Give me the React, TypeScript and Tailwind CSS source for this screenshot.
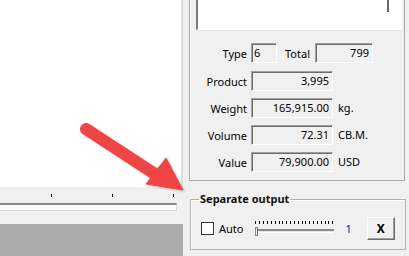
import React from "react";

const font = { fontFamily: '"Noto Sans", "Open Sans", sans-serif' };

const box =
  "h-[20px] border border-t-[#a0a0a0] border-l-[#a0a0a0] border-r-white border-b-white shadow-[inset_1px_1px_0_#6d6d6d] bg-[#f0f0f0] text-[11px] leading-[18px] text-black";

interface FieldProps {
  label: string;
  value: string;
  unit?: string;
}

const Field: React.FC<FieldProps> = ({ label, value, unit }) => (
  <div className="flex items-center">
    <div className="w-[57px] text-right text-[11px] leading-[20px] pt-[2px]">{label}</div>
    <div className={box + " ml-[4px] w-[82px] text-right pr-[3px]"}>{value}</div>
    {unit && <div className="ml-[5px] text-[11px] leading-[20px]">{unit}</div>}
  </div>
);

export default function App() {
  return (
    <div className="w-[409px] h-[256px] bg-[#f0f0f0] flex overflow-hidden relative text-black" style={font}>
      {/* Left pane */}
      <div className="w-[183px] flex flex-col">
        <div className="h-[187px] bg-white border-r-2 border-[#dedede]" />
        <div className="h-[37px] flex flex-col">
          {/* ticks */}
          <div className="w-[174px] flex justify-end gap-[60px] mt-[7px]">
            <div className="w-px h-[3px] bg-black" />
            <div className="w-px h-[3px] bg-black" />
            <div className="w-px h-[3px] bg-black" />
          </div>
          {/* track */}
          <div className="w-[177px] h-[8px] mt-[6px] border-t-2 border-t-[#8a8a8a] border-r border-r-[#d8d8d8] border-b border-b-[#d8d8d8] bg-[#fbfbfb]" />
        </div>
        <div className="flex-1 bg-[#acacac]" />
      </div>

      {/* Right pane */}
      <div className="ml-[6px] flex flex-col">
        {/* Main group */}
        <div className="w-[216px] h-[181px] border-l border-r border-b border-[#a8a8a8] shadow-[inset_1px_0_0_#ffffff] flex flex-col">
          {/* Listbox */}
          <div className="ml-[6px] w-[206px] h-[30px] bg-white border-l-2 border-l-[#7a7a7a] border-b border-b-white border-r border-r-white shadow-[0_1px_0_#e3e3e3] relative">
            <div className="absolute left-[189px] top-0 w-[2px] h-[12px] bg-[#6a6a6a]" />
          </div>

          <div className="mt-[12px] flex flex-col">
            <div className="flex items-center">
              <div className="w-[57px] text-right text-[11px] leading-[20px] pt-[2px]">Type</div>
              <div className={box + " ml-[4px] w-[26px] pl-[2px]"}>6</div>
              <div className="w-[38px] pr-[5px] text-right text-[11px] leading-[20px] pt-[2px]">Total</div>
              <div className={box + " w-[58px] text-right pr-[3px]"}>799</div>
            </div>
            <div className="mt-[6px] flex flex-col gap-[5px]">
              <Field label="Product" value="3,995" />
              <Field label="Weight" value="165,915.00" unit="kg." />
              <Field label="Volume" value="72.31" unit="CB.M." />
              <Field label="Value" value="79,900.00" unit="USD" />
            </div>
          </div>
        </div>

        {/* Separate output group */}
        <fieldset className="mt-[10px] ml-px w-[216px] h-[59px] border border-[#b0b0b0] shadow-[inset_1px_1px_0_#ffffff]">
          <legend className="ml-[8px] px-[1px] text-[11px] leading-[16px] font-bold text-[#111]">Separate output</legend>
          <div className="mt-[10px] flex items-center h-[23px]">
            <div className="ml-[10px] w-[13px] h-[13px] border border-[#333] bg-white" />
            <div className="ml-[5px] text-[11px] leading-[16px]">Auto</div>
            <div className="ml-[12px] w-[79px] h-[16px] relative flex flex-col">
              <div className="flex justify-between pr-[1px]">
                {Array.from({ length: 21 }).map((_, i) => (
                  <div key={i} className="w-px h-[3px] bg-black" />
                ))}
              </div>
              <div className="mt-[5px] h-[4px] border-t-2 border-t-[#8a8a8a] border-b border-b-white bg-[#e6e6e6]" />
              <div className="absolute left-0 top-[6px] w-[3px] h-[9px] border border-[#8a8a8a] border-r-[#6a6a6a] bg-[#f0f0f0]" />
            </div>
            <div className="ml-[11px] text-[11px] leading-[16px] text-[#40107a]">1</div>
            <div className="ml-[15px] w-[28px] h-[23px] border border-t-white border-l-white border-r-[#6d6d6d] border-b-[#6d6d6d] shadow-[inset_-1px_-1px_0_#a0a0a0] bg-[#f0f0f0] flex items-center justify-center text-[12px] font-bold">
              X
            </div>
          </div>
        </fieldset>
      </div>

      {/* Red arrow annotation */}
      <svg className="absolute inset-0 pointer-events-none" width="409" height="256" viewBox="0 0 409 256">
        <defs>
          <filter id="sh" x="-20%" y="-20%" width="140%" height="140%">
            <feDropShadow dx="1" dy="1" stdDeviation="1.2" floodColor="#000" floodOpacity="0.25" />
          </filter>
        </defs>
        <g filter="url(#sh)" fill="#f04444" stroke="#f04444">
          <line x1="86" y1="129" x2="158" y2="176" strokeWidth="12" strokeLinecap="round" />
          <polygon points="183,190 146,184 166,158" strokeWidth="1" strokeLinejoin="round" />
        </g>
      </svg>
    </div>
  );
}
